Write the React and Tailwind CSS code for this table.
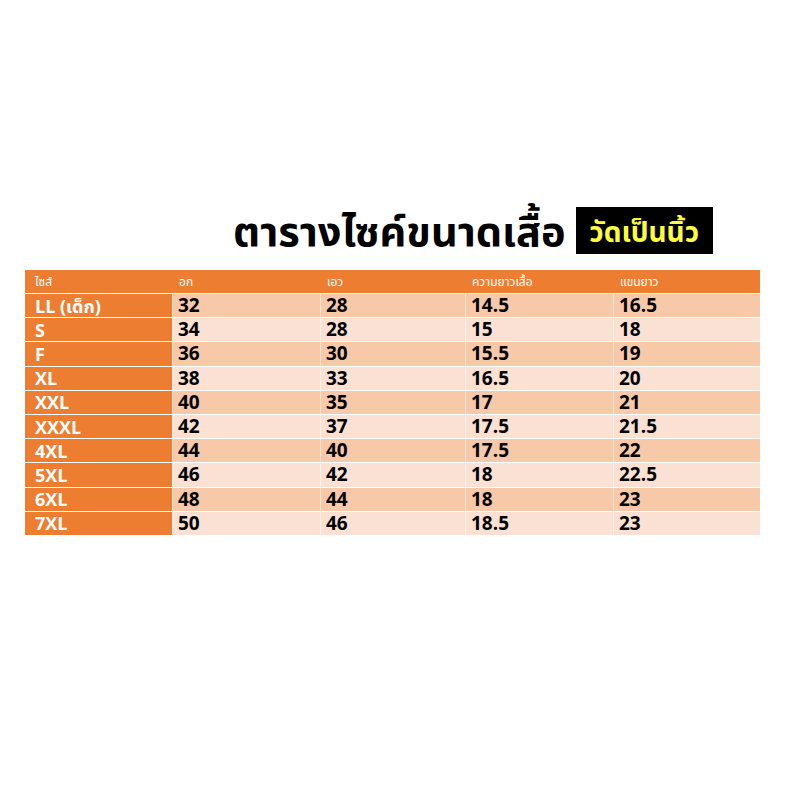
const rows = [
  ['LL (เด็ก)', '32', '28', '14.5', '16.5'],
  ['S', '34', '28', '15', '18'],
  ['F', '36', '30', '15.5', '19'],
  ['XL', '38', '33', '16.5', '20'],
  ['XXL', '40', '35', '17', '21'],
  ['XXXL', '42', '37', '17.5', '21.5'],
  ['4XL', '44', '40', '17.5', '22'],
  ['5XL', '46', '42', '18', '22.5'],
  ['6XL', '48', '44', '18', '23'],
  ['7XL', '50', '46', '18.5', '23'],
];

const head = ['ไซส์', 'อก', 'เอว', 'ความยาวเสื้อ', 'แขนยาว'];

const font = { fontFamily: '"Open Sans", "Noto Sans Thai", "Noto Sans", sans-serif' };

export default function App() {
  return (
    <div className="w-[800px] h-[800px] bg-white pt-[207px]" style={font}>
      <div className="flex items-center ml-[233px] h-[47px]">
        <span className="text-[41.5px] font-bold text-black leading-none">ตารางไซค์ขนาดเสื้อ</span>
        <span className="ml-[10px] h-[47px] w-[137px] bg-black flex items-center justify-center text-[28px] font-bold text-[#ffff3c] leading-none">
          วัดเป็นนิ้ว
        </span>
      </div>

      <div className="mt-[16px] ml-[25px] w-[735px]">
        <div className="grid grid-cols-[147px_148px_145px_148px_147px] h-[24px] bg-[#ed7d31] border-b border-white">
          {head.map((h) => (
            <div key={h} className={`flex items-center text-[12px] text-white ${h === 'ไซส์' ? 'pl-[10px]' : 'pl-[7px]'}`}>
              {h}
            </div>
          ))}
        </div>
        {rows.map((r, i) => (
          <div
            key={r[0]}
            className={`grid grid-cols-[147px_148px_145px_148px_147px] h-[24.2px] border-b border-white ${
              i % 2 === 0 ? 'bg-[#f7c9a9]' : 'bg-[#fae1d3]'
            }`}
          >
            <div className="flex items-center pl-[10px] bg-[#ed7d31] text-white font-bold text-[18px] leading-none">
              {r[0]}
            </div>
            {r.slice(1).map((v, j) => (
              <div key={j} className="flex items-center pl-[5px] border-l border-white/50 text-black font-bold text-[19px] leading-none">
                {v}
              </div>
            ))}
          </div>
        ))}
      </div>
    </div>
  );
}
